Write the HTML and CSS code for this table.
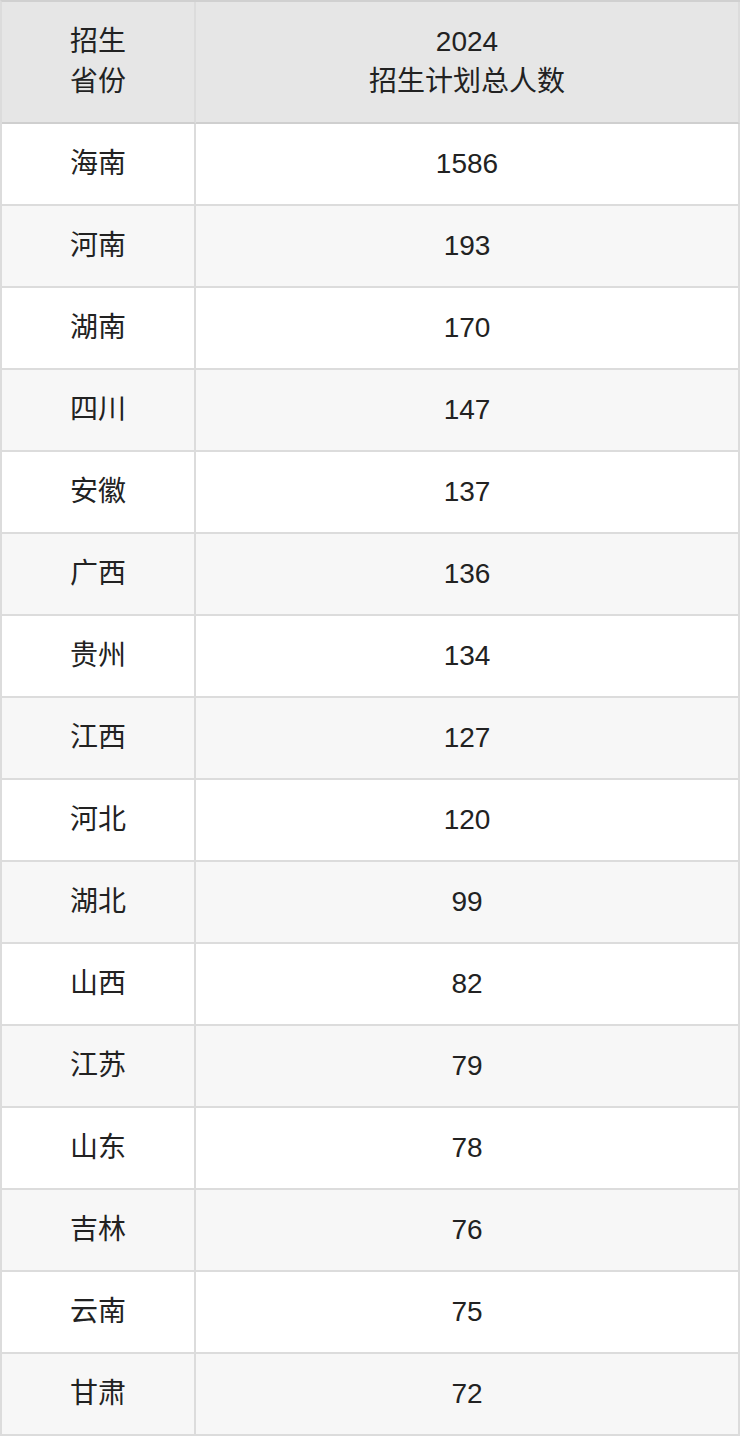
FILE: index.html
```html
<!DOCTYPE html>
<html lang="zh">
<head>
<meta charset="utf-8">
<link rel="stylesheet" href="styles.css">
</head>
<body>
<table class="plan">
  <thead>
    <tr>
      <th class="col-prov">招生<br>省份</th>
      <th class="col-num">2024<br>招生计划总人数</th>
    </tr>
  </thead>
  <tbody>
    <tr><td>海南</td><td>1586</td></tr>
    <tr><td>河南</td><td>193</td></tr>
    <tr><td>湖南</td><td>170</td></tr>
    <tr><td>四川</td><td>147</td></tr>
    <tr><td>安徽</td><td>137</td></tr>
    <tr><td>广西</td><td>136</td></tr>
    <tr><td>贵州</td><td>134</td></tr>
    <tr><td>江西</td><td>127</td></tr>
    <tr><td>河北</td><td>120</td></tr>
    <tr><td>湖北</td><td>99</td></tr>
    <tr><td>山西</td><td>82</td></tr>
    <tr><td>江苏</td><td>79</td></tr>
    <tr><td>山东</td><td>78</td></tr>
    <tr><td>吉林</td><td>76</td></tr>
    <tr><td>云南</td><td>75</td></tr>
    <tr><td>甘肃</td><td>72</td></tr>
  </tbody>
</table>
</body>
</html>
```

FILE: styles.css
```css
html, body {
  margin: 0;
  padding: 0;
  background: #ffffff;
}

.plan {
  width: 740px;
  border-collapse: separate;
  border-spacing: 0;
  border-top: 2px solid #d0d0d0;
  border-left: 2px solid #dcdcdc;
  table-layout: fixed;
  font-family: "Liberation Sans", "Noto Sans CJK SC", sans-serif;
  font-size: 28px;
  color: #222222;
}

.plan th,
.plan td {
  padding: 0;
  text-align: center;
  vertical-align: middle;
  border-right: 2px solid #dcdcdc;
  border-bottom: 2px solid #dcdcdc;
  box-sizing: border-box;
}

.plan th {
  background: #e6e6e6;
  font-weight: normal;
  height: 122px;
  line-height: 40px;
  border-bottom-color: #cfcfcf;
}

.plan .col-prov {
  width: 194px;
}

.plan .col-num {
  width: 544px;
}

.plan td {
  height: 82px;
  line-height: 40px;
}

.plan tbody tr:nth-child(even) td {
  background: #f7f7f7;
}
```
